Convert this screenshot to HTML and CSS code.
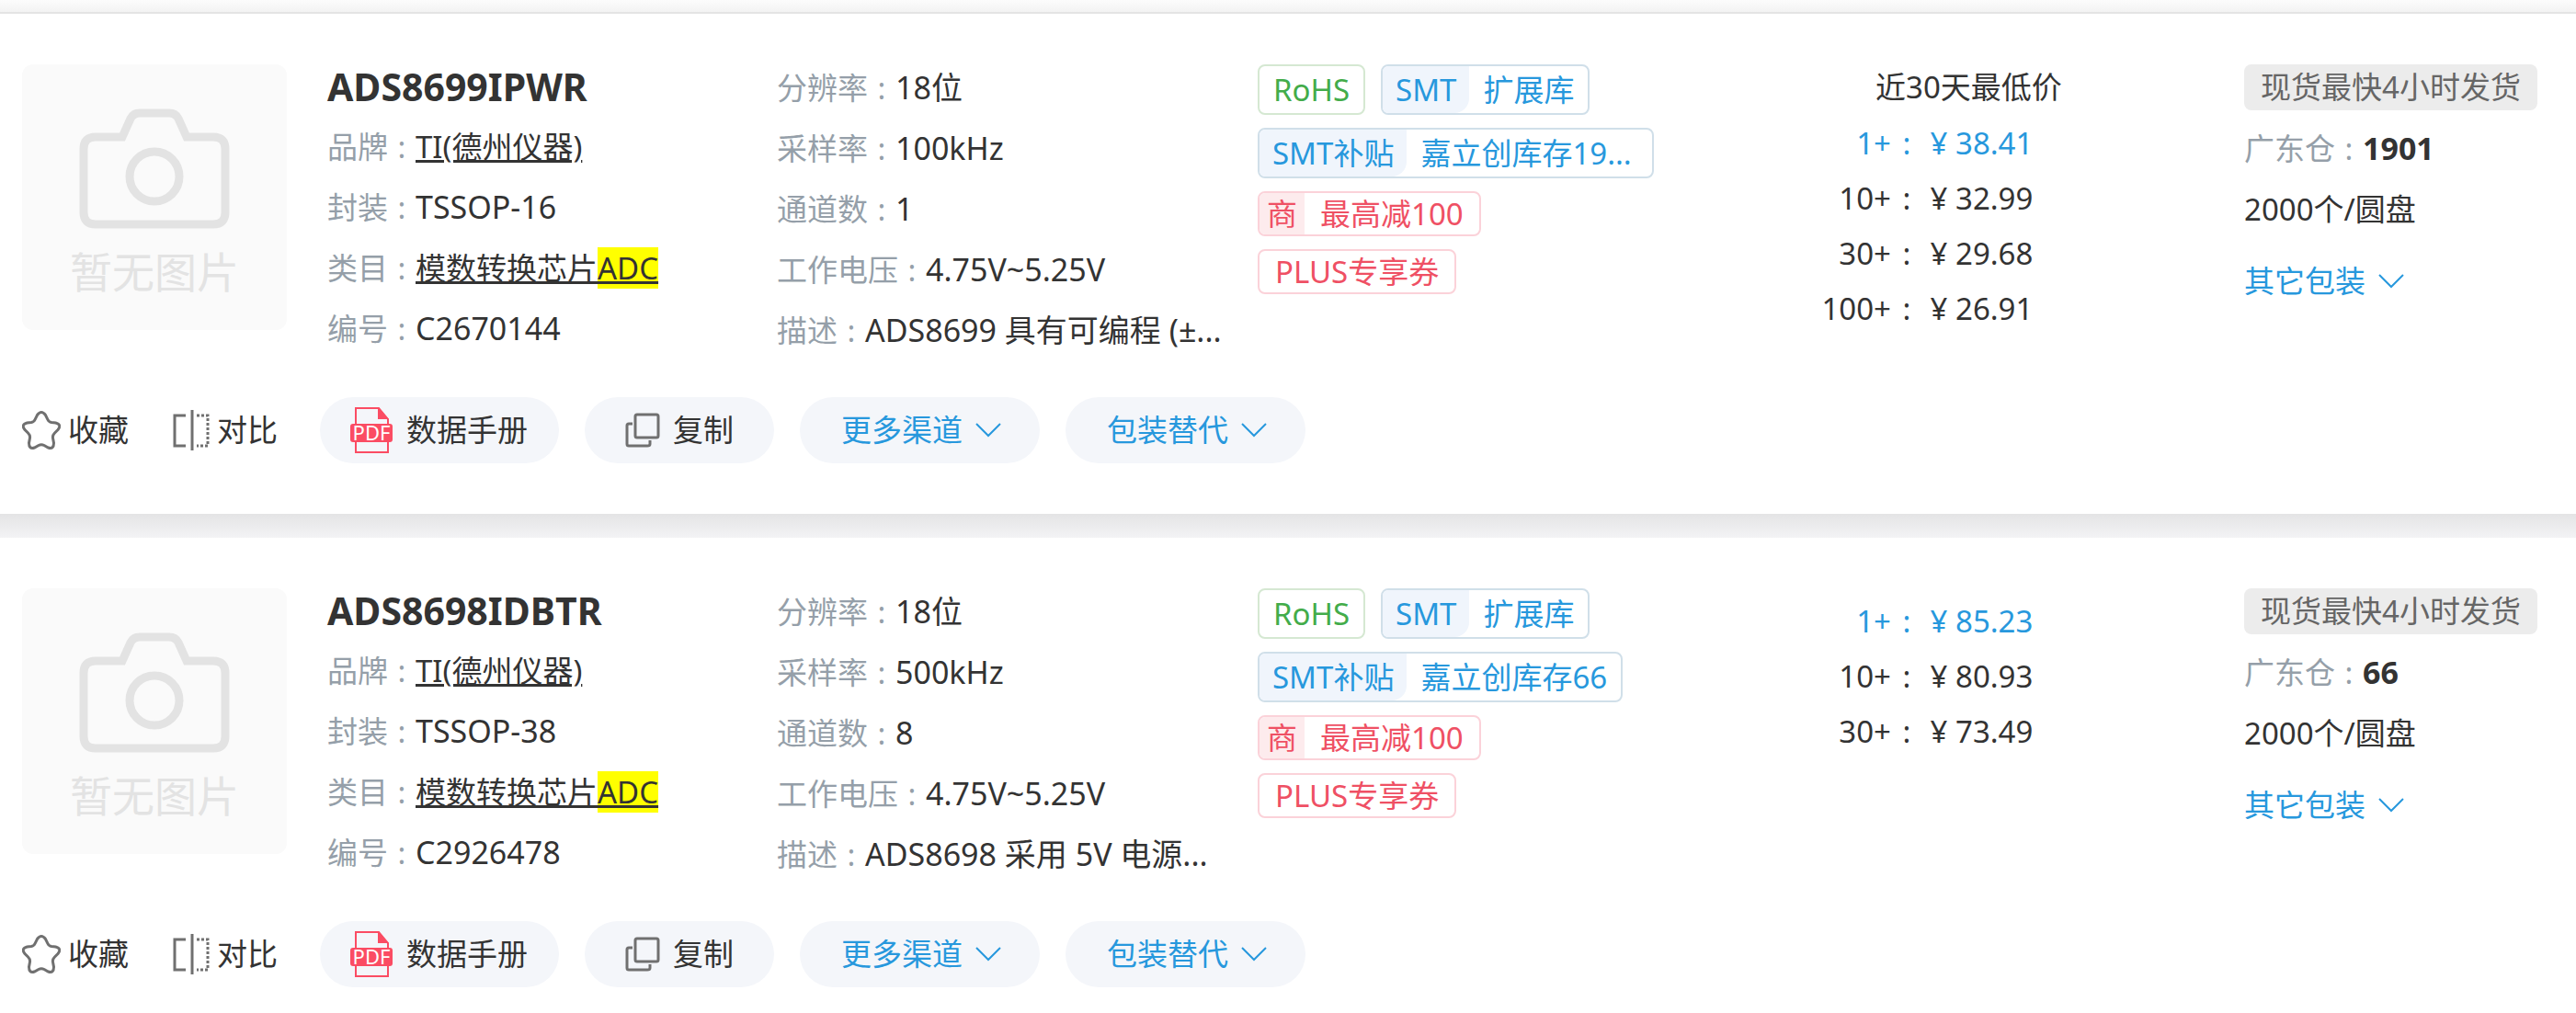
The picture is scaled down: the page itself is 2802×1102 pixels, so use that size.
FILE: index.html
```
<!DOCTYPE html>
<html lang="zh-CN">

<head>
    <meta charset="UTF-8">
    <meta name="viewport" content="width=device-width, initial-scale=1.0">
    <title>ADC</title>

    <link rel="stylesheet" href="styles.css">
</head>

<body>
    <svg class="sprite" aria-hidden="true">
        <symbol id="icon-camera" viewBox="0 0 164 131">
            <path d="M18 31H47L56 11Q59 5 66 5H98Q105 5 108 11L117 31H146Q159 31 159 44V113Q159 126 146 126H18Q5 126 5 113V44Q5 31 18 31Z" />
            <circle cx="82" cy="74" r="27" />
        </symbol>
        <symbol id="icon-star" viewBox="0 0 42 42">
            <path d="M16.500 4.500Q21 -1.500 25.500 4.500L28 9.500Q29 12 32 12.500L36.500 13Q43.500 15 39 20.500L35.500 24Q33 26.500 33.500 29.500L34.500 35Q34.500 42 28.500 40L24 37.500Q21 36 18 37.500L13.500 40Q7.500 42 7.500 35L8.500 29.500Q9 26.500 6.500 24L3 20.500Q-1.500 15 5.500 13L10 12.500Q13 12 14 9.500Z" />
        </symbol>
        <symbol id="icon-compare" viewBox="0 0 40 44">
            <path d="M14 6H2V39H14M21 0V44" />
            <path d="M26 6H38V39H26" stroke-dasharray="3 2" />
        </symbol>
        <symbol id="icon-copy" viewBox="0 0 38 38">
            <rect x="11" y="2" width="25" height="25" rx="2" />
            <path d="M8 12H4Q2 12 2 14V34Q2 36 4 36H24Q27 36 27 34V30" />
        </symbol>
        <symbol id="icon-chevron" viewBox="0 0 28 16">
            <path d="M1 1L14 14L27 1" />
        </symbol>
        <symbol id="icon-pdf" viewBox="0 0 46 50">
            <path d="M6 18V1H31L41 13V18M6 38V49H41V38" />
            <path class="fill" d="M30 0L42 13H30Z" />
            <rect class="fill" x="0" y="18" width="46" height="20" rx="3" />
            <text x="23" y="36" text-anchor="middle">PDF</text>
        </symbol>
    </svg>

    <main>
        <article class="product">
            <div class="info">
                <div class="picture">
                    <svg><use href="#icon-camera" /></svg>
                    <span>暂无图片</span>
                </div>
                <div class="base">
                    <h2>ADS8699IPWR</h2>
                    <p><span class="label">品牌<i>:</i></span><a href="#">TI(德州仪器)</a></p>
                    <p><span class="label">封装<i>:</i></span>TSSOP-16</p>
                    <p><span class="label">类目<i>:</i></span><a href="#">模数转换芯片<mark>ADC</mark></a></p>
                    <p><span class="label">编号<i>:</i></span>C2670144</p>
                </div>
                <div class="params">
                    <p><span class="label">分辨率<i>:</i></span>18位</p>
                    <p><span class="label">采样率<i>:</i></span>100kHz</p>
                    <p><span class="label">通道数<i>:</i></span>1</p>
                    <p><span class="label">工作电压<i>:</i></span>4.75V~5.25V</p>
                    <p><span class="label">描述<i>:</i></span>ADS8699 具有可编程 (±...</p>
                </div>
                <div class="tags">
                    <span class="tag green"><span>RoHS</span></span>
                    <span class="tag blue"><b>SMT</b><span>扩展库</span></span>
                    <span class="tag blue cut"><b>SMT补贴</b><span>嘉立创库存19...</span></span>
                    <span class="tag red"><b>商</b><span>最高减100</span></span>
                    <span class="tag red"><span>PLUS专享券</span></span>
                </div>
                <div class="prices">
                    <h3>近30天最低价</h3>
                    <table>
                        <tr class="active"><th>1+</th><td><i>:</i><span class="yen">¥</span>38.41</td></tr>
                        <tr><th>10+</th><td><i>:</i><span class="yen">¥</span>32.99</td></tr>
                        <tr><th>30+</th><td><i>:</i><span class="yen">¥</span>29.68</td></tr>
                        <tr><th>100+</th><td><i>:</i><span class="yen">¥</span>26.91</td></tr>
                    </table>
                </div>
                <div class="stock">
                    <span class="delivery">现货最快4小时发货</span>
                    <p><span class="label">广东仓<i>:</i></span><strong>1901</strong></p>
                    <p>2000个/圆盘</p>
                    <button class="more">其它包装<svg class="chevron"><use href="#icon-chevron" /></svg></button>
                </div>
            </div>
            <div class="actions">
                <div class="plain">
                    <button><svg class="star"><use href="#icon-star" /></svg>收藏</button>
                    <button><svg class="compare"><use href="#icon-compare" /></svg>对比</button>
                </div>
                <a class="pill" href="#"><svg class="pdf"><use href="#icon-pdf" /></svg>数据手册</a>
                <button class="pill copy"><svg class="copy-icon"><use href="#icon-copy" /></svg>复制</button>
                <button class="pill drop">更多渠道<svg class="chevron"><use href="#icon-chevron" /></svg></button>
                <button class="pill drop">包装替代<svg class="chevron"><use href="#icon-chevron" /></svg></button>
            </div>
        </article>

        <article class="product">
            <div class="info">
                <div class="picture">
                    <svg><use href="#icon-camera" /></svg>
                    <span>暂无图片</span>
                </div>
                <div class="base">
                    <h2>ADS8698IDBTR</h2>
                    <p><span class="label">品牌<i>:</i></span><a href="#">TI(德州仪器)</a></p>
                    <p><span class="label">封装<i>:</i></span>TSSOP-38</p>
                    <p><span class="label">类目<i>:</i></span><a href="#">模数转换芯片<mark>ADC</mark></a></p>
                    <p><span class="label">编号<i>:</i></span>C2926478</p>
                </div>
                <div class="params">
                    <p><span class="label">分辨率<i>:</i></span>18位</p>
                    <p><span class="label">采样率<i>:</i></span>500kHz</p>
                    <p><span class="label">通道数<i>:</i></span>8</p>
                    <p><span class="label">工作电压<i>:</i></span>4.75V~5.25V</p>
                    <p><span class="label">描述<i>:</i></span>ADS8698 采用 5V 电源...</p>
                </div>
                <div class="tags">
                    <span class="tag green"><span>RoHS</span></span>
                    <span class="tag blue"><b>SMT</b><span>扩展库</span></span>
                    <span class="tag blue"><b>SMT补贴</b><span>嘉立创库存66</span></span>
                    <span class="tag red"><b>商</b><span>最高减100</span></span>
                    <span class="tag red"><span>PLUS专享券</span></span>
                </div>
                <div class="prices">
                    <table>
                        <tr class="active"><th>1+</th><td><i>:</i><span class="yen">¥</span>85.23</td></tr>
                        <tr><th>10+</th><td><i>:</i><span class="yen">¥</span>80.93</td></tr>
                        <tr><th>30+</th><td><i>:</i><span class="yen">¥</span>73.49</td></tr>
                    </table>
                </div>
                <div class="stock">
                    <span class="delivery">现货最快4小时发货</span>
                    <p><span class="label">广东仓<i>:</i></span><strong>66</strong></p>
                    <p>2000个/圆盘</p>
                    <button class="more">其它包装<svg class="chevron"><use href="#icon-chevron" /></svg></button>
                </div>
            </div>
            <div class="actions">
                <div class="plain">
                    <button><svg class="star"><use href="#icon-star" /></svg>收藏</button>
                    <button><svg class="compare"><use href="#icon-compare" /></svg>对比</button>
                </div>
                <a class="pill" href="#"><svg class="pdf"><use href="#icon-pdf" /></svg>数据手册</a>
                <button class="pill copy"><svg class="copy-icon"><use href="#icon-copy" /></svg>复制</button>
                <button class="pill drop">更多渠道<svg class="chevron"><use href="#icon-chevron" /></svg></button>
                <button class="pill drop">包装替代<svg class="chevron"><use href="#icon-chevron" /></svg></button>
            </div>
        </article>
    </main>
</body>

</html>
```
FILE: styles.css
```
:root {
    --text: #333;
    --muted: #959fa9;
    --blue: #2798dd;
    --red: #ef5064;
}

* {
    padding: 0;
    margin: 0;
    box-sizing: border-box;
}

body {
    color: var(--text);
    background-color: #fff;
    font-family: "Noto Sans", "Noto Sans CJK SC", sans-serif;
    font-size: 33px;
    line-height: 66px;
}

main {
    padding-top: 15px;
    background: linear-gradient(#fcfcfc, #f3f3f3 13px, #e4e4e4 13px, #e4e4e4 15px, #fff 15px);
}

button {
    font: inherit;
    color: inherit;
    background: none;
    border: none;
    cursor: pointer;
}

a {
    color: inherit;
}

svg {
    fill: none;
    stroke: currentColor;
    stroke-width: 2px;
    flex-shrink: 0;
}

i {
    display: inline-block;
    width: 30px;
    font-style: normal;
    text-align: center;
}

.sprite {
    display: none;
}

.product {
    padding: 55px 0 55px 24px;
    background-color: #fff;
}

/* grey band between two products */
.product + .product {
    padding-top: 81px;
    background: linear-gradient(#e4e4e5, #f3f3f5) top / 100% 26px no-repeat #fff;
}

.info {
    display: grid;
    grid-template-columns: 332px 489fr 523fr 594fr 479fr 361fr;
    white-space: nowrap;
}

.picture {
    width: 288px;
    height: 289px;
    border-radius: 12px;
    background-color: #fafafa;
    color: #e3e3e3;
    display: flex;
    flex-direction: column;
    align-items: center;
    padding-top: 48px;
}

.picture svg {
    width: 164px;
    height: 131px;
    stroke-width: 9px;
}

.picture span {
    font-size: 46px;
    line-height: 92px;
}

.base h2 {
    font-size: 41px;
    line-height: 48px;
    margin-bottom: 8px;
}

.base p,
.params p {
    height: 66px;
    font-size: 34px;
}

.params {
    margin-top: -8px;
}

.base a {
    font-size: 33px;
    text-decoration-thickness: 3px;
}

.base .label,
.params .label {
    font-size: 33px;
}

.label {
    color: var(--muted);
}

mark {
    color: inherit;
    background-color: #ff0;
}

.tags {
    display: flex;
    flex-wrap: wrap;
    align-content: flex-start;
    gap: 14px 17px;
    padding-right: 140px;
}

.tag {
    display: flex;
    border: 2px solid;
    border-radius: 8px;
    overflow: hidden;
    line-height: 51px;
}

.tag b {
    font-weight: normal;
}

.tag span {
    padding: 0 15px;
}

.tag.green {
    color: #43ac4a;
    border-color: #d5e8d2;
}

.tag.blue {
    color: var(--blue);
    border-color: #d0dfe9;
}

.tag.blue b {
    padding: 0 14px;
    background-color: #f0f5fc;
    border-bottom-right-radius: 16px;
}

.tag.cut span {
    padding-right: 22px;
}

.tag.red {
    color: var(--red);
    border-color: #fbd2d9;
    line-height: 45px;
}

.tag.red b {
    padding: 0 8px;
    background-color: #fdebed;
}

.tag.red span {
    padding: 0 17px;
}

.prices h3 {
    font-size: 33px;
    font-weight: normal;
    line-height: 50px;
    text-align: center;
    padding-right: 120px;
}

.prices table {
    margin-top: 6px;
    border-collapse: collapse;
}

.prices tr {
    line-height: 60px;
}

.prices th {
    width: 95px;
    font-weight: normal;
    text-align: right;
}

.prices i {
    width: 34px;
}

.prices .active {
    color: var(--blue);
}

.yen {
    display: inline-block;
    width: 36px;
    text-align: center;
}

.delivery {
    display: inline-block;
    padding: 0 18px;
    border-radius: 8px;
    line-height: 50px;
    color: #666;
    background-color: #ececec;
}

.stock {
    display: flex;
    flex-direction: column;
    align-items: flex-start;
}

.stock .delivery {
    margin-bottom: 8px;
}

.stock strong {
    font-size: 34px;
}

.chevron {
    width: 28px;
    height: 16px;
    margin-left: 14px;
}

.more {
    display: flex;
    align-items: center;
    margin-top: 12px;
    color: var(--blue);
}

.actions {
    display: flex;
    align-items: center;
    gap: 28px;
    margin-top: 40px;
}

.plain {
    width: 296px;
    display: flex;
    gap: 48px;
}

.plain button {
    display: flex;
    align-items: center;
    gap: 8px;
}

.plain svg,
.copy-icon {
    color: #707070;
    stroke-width: 3px;
}

.star {
    width: 42px;
    height: 42px;
}

.compare {
    width: 40px;
    height: 44px;
}

.pill {
    display: flex;
    align-items: center;
    height: 72px;
    padding: 0 34px 0 33px;
    border-radius: 36px;
    background-color: #f4f6fa;
    text-decoration: none;
}

.pill.copy {
    padding: 0 44px;
}

.copy-icon {
    width: 38px;
    height: 38px;
    margin-right: 14px;
}

.pill.drop {
    padding: 0 42px 0 45px;
    color: var(--blue);
}

.pdf {
    width: 46px;
    height: 50px;
    margin-right: 15px;
    color: #fb4c63;
}

.fill {
    fill: #fb4c63;
    stroke: none;
}

#icon-pdf text {
    fill: #fff;
    stroke: none;
    font-size: 22px;
}
```
